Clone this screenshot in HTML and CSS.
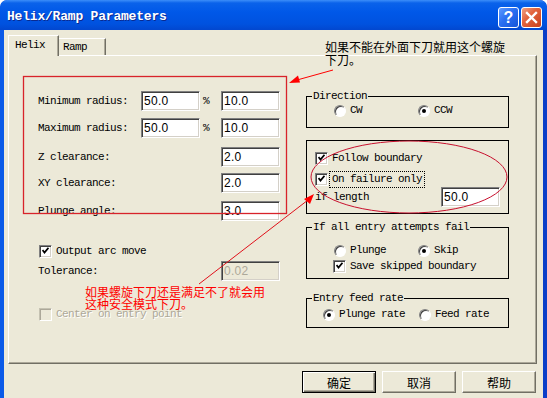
FILE: index.html
```html
<!DOCTYPE html>
<html>
<head>
<meta charset="utf-8">
<link rel="stylesheet" href="styles.css">
</head>
<body>
<div class="window">
  <div class="titlebar">
    <span class="title">Helix/Ramp Parameters</span>
    <div class="tb-buttons">
      <span class="tb-btn help">?</span>
      <span class="tb-btn close"><svg width="13" height="13" viewBox="0 0 13 13"><path d="M2 2 L11 11 M11 2 L2 11" stroke="#fff" stroke-width="2.4" stroke-linecap="square"/></svg></span>
    </div>
  </div>
  <div class="client">
    <div class="tabs">
      <div class="tab active">Helix</div>
      <div class="tab">Ramp</div>
    </div>
    <div class="panel">
      <div class="col-left">
        <div class="fields">
          <span class="lbl">Minimum radius:</span><span class="input">50.0</span><span class="pct">%</span><span class="input">10.0</span>
          <span class="lbl">Maximum radius:</span><span class="input">50.0</span><span class="pct">%</span><span class="input">10.0</span>
          <span class="lbl">Z clearance:</span><span class="input c4">2.0</span>
          <span class="lbl">XY clearance:</span><span class="input c4">2.0</span>
          <span class="lbl">Plunge angle:</span><span class="input c4">3.0</span>
        </div>
        <div class="row check-row arc"><span class="cb on"></span><span class="txt">Output arc move</span></div>
        <div class="row tol"><span class="lbl tol-lbl">Tolerance:</span><span class="input disabled">0.02</span></div>
        <div class="row check-row center"><span class="cb dis"></span><span class="txt dis-txt">Center on entry point</span></div>
      </div>
      <div class="col-right">
        <div class="group g1">
          <span class="legend">Direction</span>
          <div class="radios r1"><span class="ritem w84"><span class="rb"></span><span class="txt">CW</span></span><span class="ritem"><span class="rb on"></span><span class="txt">CCW</span></span></div>
        </div>
        <div class="group g2">
          <div class="check-row"><span class="cb on"></span><span class="txt">Follow boundary</span></div>
          <div class="check-row r2"><span class="cb on"></span><span class="txt focus">On failure only</span></div>
          <div class="len-row"><span class="txt">if length</span><span class="input">50.0</span></div>
        </div>
        <div class="group g3">
          <span class="legend">If all entry attempts fail</span>
          <div class="radios r3"><span class="ritem w84"><span class="rb"></span><span class="txt">Plunge</span></span><span class="ritem"><span class="rb on"></span><span class="txt">Skip</span></span></div>
          <div class="check-row save"><span class="cb on"></span><span class="txt">Save skipped boundary</span></div>
        </div>
        <div class="group g4">
          <span class="legend">Entry feed rate</span>
          <div class="radios r4"><span class="ritem w96"><span class="rb on"></span><span class="txt">Plunge rate</span></span><span class="ritem"><span class="rb"></span><span class="txt">Feed rate</span></span></div>
        </div>
      </div>
    </div>
    <div class="buttons">
      <span class="btn default">确定</span>
      <span class="btn">取消</span>
      <span class="btn">帮助</span>
    </div>
  </div>
  <svg class="overlay" width="547" height="398" viewBox="0 0 547 398">
    <rect x="23.5" y="76.5" width="263" height="137" fill="none" stroke="#d8232a" stroke-width="1.3"/>
    <line x1="333" y1="70" x2="297" y2="80" stroke="#f00" stroke-width="1"/>
    <polygon points="289,83 298,75.5 300,82.5" fill="#f00"/>
    <ellipse cx="409" cy="177" rx="98" ry="36" fill="none" stroke="#c8102e" stroke-width="1"/>
    <line x1="199" y1="284" x2="308" y2="200" stroke="#e0101a" stroke-width="1"/>
    <polygon points="314,194 304,199 310,204" fill="#f00"/>
  </svg>
  <div class="note note-top">如果不能在外面下刀就用这个螺旋<br>下刀。</div>
  <div class="note note-red">如果螺旋下刀还是满足不了就会用<br>这种安全模式下刀。</div>
</div>
</body>
</html>
```
FILE: styles.css
```css
* { box-sizing: border-box; }
body { margin: 0; background: #fff; }
.window {
  position: relative;
  width: 547px;
  height: 398px;
  overflow: hidden;
  background: linear-gradient(90deg, #0b5ae8 0, #0b5ae8 50%, #0a3ec8 50%, #0a3ec8 100%);
  border-radius: 7px 7px 0 0;
  font-family: "Liberation Mono", monospace;
  font-size: 11px;
  letter-spacing: -0.6px;
  color: #000;
}
.titlebar {
  height: 30px;
  display: flex;
  align-items: flex-start;
  justify-content: space-between;
  background: linear-gradient(#3c8ef9 0, #0a62ea 3px, #0058e8 40%, #0052df 80%, #0247cf 100%);
  border-radius: 7px 7px 0 0;
  padding: 0 5px 0 7px;
}
.title {
  color: #fff;
  font-weight: bold;
  font-size: 13px;
  letter-spacing: -0.2px;
  line-height: 14px;
  margin-top: 10px;
  text-shadow: 1px 1px #0a2a90;
}
.tb-buttons { display: flex; gap: 2px; margin-top: 7px; }
.tb-btn {
  width: 21px;
  height: 21px;
  border: 1px solid #fff;
  border-radius: 3px;
  display: flex;
  align-items: center;
  justify-content: center;
  color: #fff;
  font-family: "Liberation Sans", sans-serif;
  font-weight: bold;
  font-size: 16px;
  letter-spacing: 0;
}
.help { background: linear-gradient(135deg, #5d9bff 0, #2a6ff2 45%, #1454d8 100%); }
.close { background: linear-gradient(135deg, #f0a084 0, #e2643e 40%, #c9401c 100%); }

.client {
  height: 368px;
  margin: 0 4px;
  background: #ece9d8;
  padding-top: 5px;
}
.tabs {
  display: flex;
  align-items: flex-end;
  height: 20px;
  margin-left: 4px;
}
.tab {
  height: 17px;
  width: 47px;
  padding-left: 4px;
  line-height: 17px;
  border-top: 1px solid #fff;
  border-right: 1px solid #716f64;
  box-shadow: inset -1px 0 #aca899;
  background: #ece9d8;
}
.tab.active {
  height: 21px;
  width: 51px;
  margin-bottom: -1px;
  position: relative;
  z-index: 1;
  border-left: 1px solid #fff;
  padding-left: 6px;
  line-height: 18px;
}
.panel {
  display: flex;
  height: 309px;
  margin: 0 6px 0 4px;
  border-top: 1px solid #fff;
  border-left: 1px solid #fff;
  border-right: 1px solid #716f64;
  border-bottom: 1px solid #716f64;
  box-shadow: inset -1px -1px #aca899;
}
.col-left { width: 297px; padding: 35px 0 0 29px; }
.col-right { width: 203px; padding-top: 40px; }

.fields {
  display: grid;
  grid-template-columns: 103px 59px 21px 59px;
  grid-template-rows: 27px 29px 26px 28px 20px;
  align-items: start;
}
.lbl { line-height: 20px; height: 20px; }
.pct { line-height: 20px; padding-left: 3px; }
.c4 { grid-column: 4; }
.input {
  height: 20px;
  background: #fff;
  border: 1px solid;
  border-color: #808080 #fff #fff #808080;
  box-shadow: inset 1px 1px #404040, inset -1px -1px #d4d0c8;
  font-family: "Liberation Sans", sans-serif;
  font-size: 12px;
  letter-spacing: 0.3px;
  line-height: 18px;
  padding-left: 2px;
  width: 59px;
}
.input.disabled { background: #ece9d8; color: #aca899; }

.row { display: flex; align-items: center; }
.check-row { display: flex; align-items: center; height: 13px; gap: 4px; }
.arc { margin-top: 24px; margin-left: 1px; }
.tol { margin-top: 3px; height: 20px; }
.tol-lbl { width: 183px; }
.center { margin-top: 27px; margin-left: 1px; }

.cb {
  width: 13px;
  height: 13px;
  flex: none;
  background: #fff;
  border: 1px solid;
  border-color: #808080 #fff #fff #808080;
  box-shadow: inset 1px 1px #404040, inset -1px -1px #d4d0c8;
  position: relative;
}
.cb.on::after {
  content: "";
  position: absolute;
  left: 2px;
  top: 1px;
  width: 7px;
  height: 7px;
  background: no-repeat center/contain url("data:image/svg+xml;utf8,<svg xmlns='http://www.w3.org/2000/svg' width='7' height='7' viewBox='0 0 7 7'><path d='M0.5 3 L2.5 5.5 L6.5 0.8' stroke='black' stroke-width='1.8' fill='none'/></svg>");
}
.cb.dis { background: #ece9d8; border-color: #c5c2b2 #fff #fff #c5c2b2; box-shadow: inset 1px 1px #aca899; }
.dis-txt { color: #aca899; text-shadow: 1px 1px #fff; }
.txt { white-space: nowrap; line-height: 13px; }

.group { border: 1px solid #000; }
.legend {
  display: block;
  width: fit-content;
  height: 12px;
  line-height: 12px;
  margin: -7px 0 0 5px;
  padding: 0 1px;
  background: #ece9d8;
}
.radios { display: flex; align-items: center; height: 13px; }
.ritem { display: flex; align-items: center; gap: 4px; }
.w84 { width: 84px; }
.w96 { width: 96px; }
.rb {
  width: 12px;
  height: 12px;
  flex: none;
  border-radius: 50%;
  background: #fff;
  border: 1px solid;
  border-color: #808080 #fff #fff #808080;
  box-shadow: inset 1px 1px #404040;
  display: flex;
  align-items: center;
  justify-content: center;
}
.rb.on::after { content: ""; width: 4px; height: 4px; border-radius: 50%; background: #000; }

.g1 { padding-bottom: 10px; }
.r1 { margin: 2px 0 0 27px; }
.g2 { margin-top: 12px; padding: 11px 8px 6px 8px; }
.r2 { margin-top: 8px; }
.focus { outline: 1px dotted #000; outline-offset: 1px; padding: 0 1px; margin-left: -1px; }
.len-row { display: flex; justify-content: space-between; align-items: center; height: 20px; margin-top: 1px; }
.g3 { margin-top: 13px; padding-bottom: 5px; }
.r3 { margin: 11px 0 0 27px; }
.save { margin: 3px 0 0 26px; }
.g4 { margin-top: 19px; padding-bottom: 6px; }
.r4 { margin: 4px 0 0 16px; }

.buttons { display: flex; justify-content: flex-end; gap: 6px; margin: 7px 7px 0 0; }
.btn {
  width: 74px;
  height: 22px;
  display: flex;
  align-items: center;
  justify-content: center;
  font-family: "Noto Sans CJK SC", sans-serif;
  font-size: 12px;
  letter-spacing: 0;
  background: #ece9d8;
  border: 1px solid;
  border-color: #fff #716f64 #716f64 #fff;
  box-shadow: inset -1px -1px #aca899;
}
.btn.default { border: 1px solid #000; box-shadow: inset 1px 1px #fff, inset -1px -1px #716f64, inset -2px -2px #aca899; }

.overlay { position: absolute; left: 0; top: 0; pointer-events: none; }
.note {
  position: absolute;
  font-family: "Noto Sans CJK SC", sans-serif;
  font-size: 12px;
  letter-spacing: 0;
  line-height: 13px;
  white-space: nowrap;
}
.note-top { left: 325px; top: 40px; color: #000; }
.note-red { left: 85px; top: 286px; color: #f00; line-height: 12px; }
```
